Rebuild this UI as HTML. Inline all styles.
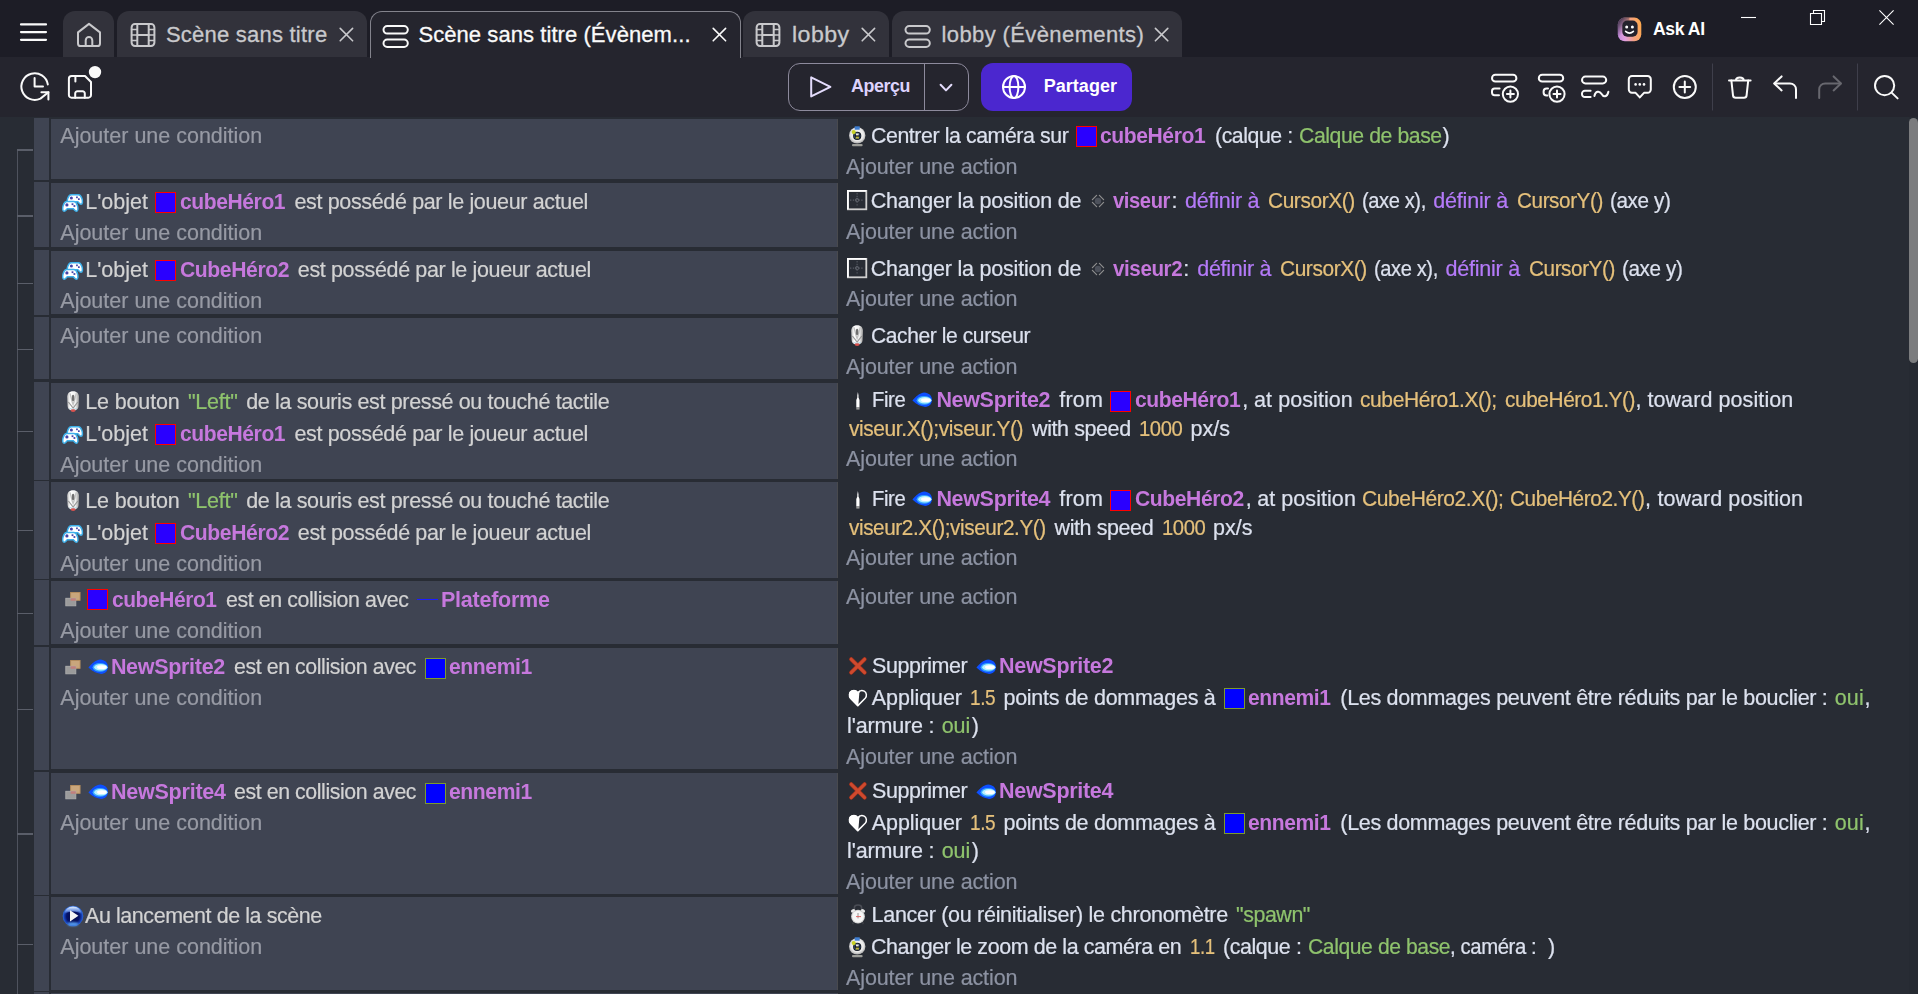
<!DOCTYPE html>
<html lang="fr"><head><meta charset="utf-8"><title>GDevelop - Scène sans titre (Évènements)</title>
<style>
html,body{margin:0;padding:0}
body{width:1918px;height:994px;overflow:hidden;background:#282c34;font-family:"Liberation Sans",sans-serif;position:relative}
#titlebar{position:absolute;left:0;top:0;width:1918px;height:57px;background:#1d1d26}
#toolbar{position:absolute;left:0;top:57px;width:1918px;height:60px;background:#25252e}
#sheet{position:absolute;left:0;top:0;width:1918px;height:994px;overflow:hidden;pointer-events:none;will-change:transform}
#ctext{position:absolute;left:0;top:0;width:1918px;height:118px}
#chromesvg{position:absolute;left:0;top:0}
.tabx{position:absolute;top:11px;height:46px;background:#32323b;border-radius:12px 12px 0 0}
.tabact{position:absolute;top:11px;height:47px;background:#25252e;border:1px solid #83838c;border-bottom:none;border-radius:12px 12px 0 0;box-sizing:border-box}
.btnO{position:absolute;box-sizing:border-box;border:1px solid #8d8a9c;border-radius:12px}
.btnP{position:absolute;background:#4b27cf;border-radius:12px}
i{display:block;position:absolute;font-style:normal}
.t{position:absolute;white-space:pre;transform-origin:0 0;font-size:21.5px;line-height:24px;height:24px}
.c{color:#d2d2d2;-webkit-text-stroke:0.22px #d2d2d2}
.a{color:#dce1ee;-webkit-text-stroke:0.22px #dce1ee}
.addc{color:#979aa4;-webkit-text-stroke:0.22px #979aa4}
.adda{color:#8c92a2;-webkit-text-stroke:0.22px #8c92a2}
.obj{color:#c678dd;font-weight:bold}
.str{color:#8fc36d;-webkit-text-stroke:0.22px #8fc36d}
.num{color:#e5c07b;-webkit-text-stroke:0.22px #e5c07b}
.op{color:#b47af8;-webkit-text-stroke:0.22px #b47af8}
.tab{color:#c9c9cc;font-size:22px;-webkit-text-stroke:0.3px #c9c9cc}
.tabA{color:#fafafa;font-size:22px;-webkit-text-stroke:0.3px #fafafa}
.btn{color:#ddd3fd;font-weight:bold;font-size:18px}
.btnW{color:#fff;font-weight:bold;font-size:18px}
.hd{left:34px;width:15px;background:#3f4452}
.cd{left:51px;width:786px;background:#3f4452;border-right:1px solid #494a4e}
.tk{left:17px;width:16px;height:1.5px;background:#5a5e69}
.vl{left:17px;top:149px;width:1px;height:845px;background:#4f535e}
.ic{position:absolute;overflow:visible}
.sq{box-sizing:content-box;border:1px solid #f00}
.ln{height:1px;background:#1c1cff}
.sbt{left:1909px;top:117px;width:9px;height:877px;background:#262a32}
.sb{left:1909px;top:118px;width:8.5px;height:245px;background:#7b7c7e;border-radius:4.5px}
</style></head>
<body>
<div id="titlebar"></div>
<div id="toolbar"></div>
<div class="tabx" style="left:63px;width:51px"></div>
<div class="tabx" style="left:117px;width:250px"></div>
<div class="tabact" style="left:370px;width:370.5px"></div>
<div class="tabx" style="left:743px;width:146px"></div>
<div class="tabx" style="left:892px;width:290.3px"></div>
<div class="btnO" style="left:788px;top:63px;width:181px;height:48px"></div>
<div class="btnP" style="left:981px;top:63px;width:151px;height:48px"></div>
<svg id="chromesvg" width="1918" height="118" viewBox="0 0 1918 118" fill="none" stroke-linecap="round" stroke-linejoin="round">
<!-- hamburger -->
<path d="M21,24.4 H46 M21,32.1 H46 M21,39.8 H46" stroke="#fafafa" stroke-width="2.2"/>
<!-- home -->
<g stroke="#c9c9cc" stroke-width="2">
<path d="M78,32.4 L89,23.9 L100,32.4 V43.4 a2.6 2.6 0 0 1 -2.6 2.6 H80.6 a2.6 2.6 0 0 1 -2.6 -2.6 Z"/>
<path d="M85.7,46 V40.4 a3.3 3.3 0 0 1 6.6 0 V46"/>
</g>
<!-- film icons -->
<g id="film1" stroke="#c9c9cc" stroke-width="2">
<rect x="131.6" y="24" width="22.8" height="22" rx="3.4"/>
<path d="M137.3,24 V46 M148.7,24 V46 M137.3,35 H148.7" />
<path d="M131.6,29.5 H137.3 M131.6,35 H137.3 M131.6,40.5 H137.3 M148.7,29.5 H154.4 M148.7,35 H154.4 M148.7,40.5 H154.4" stroke-width="1.6"/>
</g>
<g stroke="#c9c9cc" stroke-width="2" transform="translate(625,0)">
<rect x="131.6" y="24" width="22.8" height="22" rx="3.4"/>
<path d="M137.3,24 V46 M148.7,24 V46 M137.3,35 H148.7" />
<path d="M131.6,29.5 H137.3 M131.6,35 H137.3 M131.6,40.5 H137.3 M148.7,29.5 H154.4 M148.7,35 H154.4 M148.7,40.5 H154.4" stroke-width="1.6"/>
</g>
<!-- events icons -->
<g stroke="#fafafa" stroke-width="2">
<rect x="383.5" y="26" width="24.3" height="7.6" rx="3.8"/>
<rect x="383.5" y="39.6" width="24.3" height="7.4" rx="3.7"/>
</g>
<g stroke="#c9c9cc" stroke-width="2">
<rect x="905.5" y="26" width="24.3" height="7.6" rx="3.8"/>
<rect x="905.5" y="39.6" width="24.3" height="7.4" rx="3.7"/>
</g>
<!-- tab close X -->
<g stroke="#c9c9cc" stroke-width="1.6">
<path d="M340.2,28.4 L352.6,40.8 M352.6,28.4 L340.2,40.8"/>
<path d="M862.2,28.4 L874.6,40.8 M874.6,28.4 L862.2,40.8"/>
<path d="M1155.4,28.4 L1167.8,40.8 M1167.8,28.4 L1155.4,40.8"/>
</g>
<path d="M713.2,28.4 L725.6,40.8 M725.6,28.4 L713.2,40.8" stroke="#fafafa" stroke-width="1.6"/>
<!-- Ask AI icon -->
<defs><linearGradient id="aig" x1="0" y1="0.6" x2="1" y2="0.4"><stop offset="0" stop-color="#c68cdc"/><stop offset="0.25" stop-color="#e3a0dc"/><stop offset="0.6" stop-color="#f3a083"/><stop offset="1" stop-color="#ffa94e"/></linearGradient>
<linearGradient id="aig2" x1="0" y1="0" x2="0.55" y2="0.75"><stop offset="0" stop-color="#1d1d26" stop-opacity="0.95"/><stop offset="0.45" stop-color="#1d1d26" stop-opacity="0.55"/><stop offset="1" stop-color="#1d1d26" stop-opacity="0"/></linearGradient></defs>
<rect x="1617.8" y="17.6" width="23.5" height="23.6" rx="7" fill="url(#aig)"/>
<path d="M1617.8,36 V24.6 a7 7 0 0 1 7 -7 H1629.4 V36 Z" fill="url(#aig2)"/>
<rect x="1622.3" y="20.6" width="15.3" height="16.2" rx="5" fill="#24222d"/>
<circle cx="1626.7" cy="26.9" r="1.5" fill="#fff"/><circle cx="1632.4" cy="26.9" r="1.5" fill="#fff"/>
<path d="M1625.6,31.4 Q1629.5,34.8 1633.4,31.4" stroke="#fff" stroke-width="1.6"/>
<!-- window controls -->
<g stroke="#fff" stroke-width="1.1" stroke-linecap="butt">
<path d="M1741,17.5 H1756"/>
<path d="M1810.5,13.5 H1821.5 V24.5 H1810.5 Z" stroke-linejoin="miter"/>
<path d="M1813.5,13.5 V10.5 H1824.5 V21.5 H1821.5" stroke-linejoin="miter"/>
<path d="M1879.4,10.4 L1893.6,24.6 M1893.6,10.4 L1879.4,24.6"/>
</g>
<!-- history icon -->
<g stroke="#fafafa" stroke-width="2">
<path d="M47.8,84.4 A13.3 13.3 0 1 0 40.4,98.6 L48.4,92.2"/>
<path d="M34.6,78 V86.6 H43"/>
<path d="M41.4,92.2 H48.4 V99.4"/>
</g>
<!-- save icon -->
<g stroke="#fafafa" stroke-width="2">
<path d="M71.6,76 H85 L91,82 V95 a2.7 2.7 0 0 1 -2.7 2.7 H71.6 a2.7 2.7 0 0 1 -2.7 -2.7 V78.7 a2.7 2.7 0 0 1 2.7 -2.7 Z"/>
<path d="M75.4,76 V81.4"/>
<path d="M75.2,97.7 V93.4 a2.2 2.2 0 0 1 2.2,-2.2 H82.6 a2.2 2.2 0 0 1 2.2,2.2 V97.7"/>
</g>
<circle cx="95" cy="72.1" r="6.2" fill="#fafafa"/>
<!-- apercu -->
<path d="M924.5,63.5 V110.5" stroke="#8d8a9c" stroke-width="1" stroke-linecap="butt"/>
<path d="M811.2,77.4 V96.4 L830.4,86.9 Z" stroke="#e4dcfc" stroke-width="2"/>
<path d="M940.6,84.8 L946,90.4 L951.4,84.8" stroke="#e4dcfc" stroke-width="2"/>
<!-- globe -->
<g stroke="#fff" stroke-width="2">
<circle cx="1014" cy="87" r="11"/>
<ellipse cx="1014" cy="87" rx="4.4" ry="11"/>
<path d="M1003,87 H1025"/>
</g>
<!-- toolbar right icons -->
<g stroke="#fafafa" stroke-width="2">
<!-- add event -->
<rect x="1492" y="74.8" width="24.4" height="6.8" rx="3.4"/>
<path d="M1499.6,88.6 H1494.6 a2.6 2.6 0 0 0 -2.6 2.6 V92.6 a2.6 2.6 0 0 0 2.6 2.6 H1499"/>
<circle cx="1510.4" cy="94.1" r="7.6"/>
<path d="M1510.4,90.6 V97.6 M1506.9,94.1 H1513.9"/>
<!-- add sub event -->
<rect x="1538.8" y="74.8" width="24.4" height="6.8" rx="3.4"/>
<path d="M1548,88.6 H1546.6 a3 3 0 0 0 -3 3 V92.4 a3 3 0 0 0 3 3 H1547.4"/>
<circle cx="1557" cy="94.1" r="7.6"/>
<path d="M1557,90.6 V97.6 M1553.5,94.1 H1560.5"/>
<!-- add other -->
<rect x="1582" y="76.6" width="24.2" height="6.8" rx="3.4"/>
<path d="M1590.6,90.8 H1584.8 a2.8 2.8 0 0 0 -2.8 2.8 V94.2 a2.8 2.8 0 0 0 2.8 2.8 H1590.6"/>
<path d="M1594.4,96 C1595.4,91 1599.4,90.4 1601.4,93.8 C1603.4,97.4 1607.2,97.4 1608.4,91.8"/>
<!-- comment -->
<path d="M1632,76 H1647.6 a3.2 3.2 0 0 1 3.2 3.2 V89.6 a3.2 3.2 0 0 1 -3.2 3.2 H1644 L1639.8,97.4 L1635.6,92.8 H1632 a3.2 3.2 0 0 1 -3.2 -3.2 V79.2 a3.2 3.2 0 0 1 3.2 -3.2 Z"/>
<!-- plus circle -->
<circle cx="1684.8" cy="87" r="11"/>
<path d="M1684.8,81.6 V92.4 M1679.4,87 H1690.2"/>
<!-- trash -->
<path d="M1729,80.4 H1750.6"/>
<path d="M1736,80 C1736,76.6 1743.6,76.6 1743.6,80"/>
<path d="M1731.4,80.6 L1733,95.4 a2.6 2.6 0 0 0 2.6 2.4 H1744 a2.6 2.6 0 0 0 2.6 -2.4 L1748.2,80.6"/>
<!-- undo -->
<path d="M1781.6,76.4 L1774.2,83.4 L1781.6,90.4"/>
<path d="M1774.6,83.4 H1790 a6 6 0 0 1 6 6 V98"/>
<!-- search -->
<circle cx="1884.6" cy="85.6" r="9.6"/>
<path d="M1891.6,92.6 L1897.6,98.4"/>
</g>
<g fill="#fafafa"><circle cx="1635.6" cy="84.4" r="1.3"/><circle cx="1639.8" cy="84.4" r="1.3"/><circle cx="1644" cy="84.4" r="1.3"/></g>
<!-- redo (disabled) -->
<g stroke="#68686f" stroke-width="2">
<path d="M1833.6,76.4 L1841,83.4 L1833.6,90.4"/>
<path d="M1840.6,83.4 H1825.2 a6 6 0 0 0 -6 6 V98"/>
</g>
<!-- dividers -->
<path d="M1712.5,63.5 V110.5 M1857.5,63.5 V110.5" stroke="#3f3f4b" stroke-width="1" stroke-linecap="butt"/>
</svg>

<div id="ctext"><span class="t tab" style="left:165.9px;top:23px;letter-spacing:0.232px">Scène sans titre</span><span class="t tabA" style="left:418.4px;top:23px;letter-spacing:0.072px">Scène sans titre (Évènem...</span><span class="t tab" style="left:792.45px;top:23px;letter-spacing:0.42px;transform:scaleX(1.0531)">lobby</span><span class="t tab" style="left:941.5px;top:23px;letter-spacing:0.393px">lobby (Évènements)</span><span class="t btn" style="left:850.6px;top:74px;letter-spacing:-0.42px;transform:scaleX(0.9912)">Aperçu</span><span class="t btnW" style="left:1043.7px;top:74px;letter-spacing:0.038px">Partager</span><span class="t btnW" style="left:1653.3px;top:17px;letter-spacing:-0.42px;transform:scaleX(0.9769)">Ask AI</span></div>
<div id="sheet">
<i class="vl"></i>
<i class="hd" style="top:118px;height:61.6px"></i><i class="cd" style="top:119px;height:60px"></i><i class="hd" style="top:182px;height:65px"></i><i class="cd" style="top:183px;height:64px"></i><i class="hd" style="top:250px;height:64.6px"></i><i class="cd" style="top:251px;height:63px"></i><i class="hd" style="top:317px;height:62px"></i><i class="cd" style="top:318px;height:61px"></i><i class="hd" style="top:382px;height:97.8px"></i><i class="cd" style="top:383px;height:96px"></i><i class="hd" style="top:481px;height:97.8px"></i><i class="cd" style="top:482px;height:96px"></i><i class="hd" style="top:580px;height:64.8px"></i><i class="cd" style="top:581px;height:63px"></i><i class="hd" style="top:647px;height:122.8px"></i><i class="cd" style="top:648px;height:121px"></i><i class="hd" style="top:772px;height:122.8px"></i><i class="cd" style="top:773px;height:121px"></i><i class="hd" style="top:896px;height:95px"></i><i class="cd" style="top:897px;height:93px"></i><i class="hd" style="top:992px;height:2px"></i><i class="cd" style="top:993px;height:1px"></i><i class="tk" style="top:149.0px;height:2px"></i><i class="tk" style="top:215.1px;height:1.6px"></i><i class="tk" style="top:282.75px;height:1.3px"></i><i class="tk" style="top:348.85px;height:1.3px"></i><i class="tk" style="top:430.85px;height:1.3px"></i><i class="tk" style="top:529.85px;height:1.3px"></i><i class="tk" style="top:612.7px;height:1.4px"></i><i class="tk" style="top:708.7px;height:1.4px"></i><i class="tk" style="top:833.1px;height:1.6px"></i><i class="tk" style="top:943.75px;height:1.3px"></i>
<svg class="ic" style="left:61px;top:193px" width="24" height="20" viewBox="-1 -1 24 20"><g transform="translate(4.5,-6.9)"><path d="M2.2,17.2 C0.4,17.2 0.3,14 1.2,11.4 C2,9 2.8,7.6 4.8,7.6 L11.8,7.6 C13.8,7.6 14.6,9 15.4,11.4 C16.3,14 16.2,17.2 14.4,17.2 C13.1,17.2 12.4,15.6 11.4,14.7 L5.2,14.7 C4.2,15.6 3.5,17.2 2.2,17.2 Z" fill="#fff" stroke="#3db0ea" stroke-width="1.5"/><circle cx="4.9" cy="11" r="1.5" fill="#4343a8"/><rect x="9.6" y="9.4" width="1.7" height="1.7" fill="#4343a8"/><rect x="11.5" y="11.2" width="1.7" height="1.7" fill="#4343a8"/></g><path d="M2.2,17.2 C0.4,17.2 0.3,14 1.2,11.4 C2,9 2.8,7.6 4.8,7.6 L11.8,7.6 C13.8,7.6 14.6,9 15.4,11.4 C16.3,14 16.2,17.2 14.4,17.2 C13.1,17.2 12.4,15.6 11.4,14.7 L5.2,14.7 C4.2,15.6 3.5,17.2 2.2,17.2 Z" fill="#fff" stroke="#3db0ea" stroke-width="1.5"/><circle cx="4.9" cy="10.9" r="1.6" fill="#4343a8"/><rect x="9.6" y="9.3" width="1.8" height="1.8" fill="#4343a8"/><rect x="11.5" y="11.1" width="1.8" height="1.8" fill="#4343a8"/></svg><i class="sq" style="left:155px;top:192px;width:19px;height:19px;border-color:#ff0000;background:#2a00ff"></i><svg class="ic" style="left:61px;top:261px" width="24" height="20" viewBox="-1 -1 24 20"><g transform="translate(4.5,-6.9)"><path d="M2.2,17.2 C0.4,17.2 0.3,14 1.2,11.4 C2,9 2.8,7.6 4.8,7.6 L11.8,7.6 C13.8,7.6 14.6,9 15.4,11.4 C16.3,14 16.2,17.2 14.4,17.2 C13.1,17.2 12.4,15.6 11.4,14.7 L5.2,14.7 C4.2,15.6 3.5,17.2 2.2,17.2 Z" fill="#fff" stroke="#3db0ea" stroke-width="1.5"/><circle cx="4.9" cy="11" r="1.5" fill="#4343a8"/><rect x="9.6" y="9.4" width="1.7" height="1.7" fill="#4343a8"/><rect x="11.5" y="11.2" width="1.7" height="1.7" fill="#4343a8"/></g><path d="M2.2,17.2 C0.4,17.2 0.3,14 1.2,11.4 C2,9 2.8,7.6 4.8,7.6 L11.8,7.6 C13.8,7.6 14.6,9 15.4,11.4 C16.3,14 16.2,17.2 14.4,17.2 C13.1,17.2 12.4,15.6 11.4,14.7 L5.2,14.7 C4.2,15.6 3.5,17.2 2.2,17.2 Z" fill="#fff" stroke="#3db0ea" stroke-width="1.5"/><circle cx="4.9" cy="10.9" r="1.6" fill="#4343a8"/><rect x="9.6" y="9.3" width="1.8" height="1.8" fill="#4343a8"/><rect x="11.5" y="11.1" width="1.8" height="1.8" fill="#4343a8"/></svg><i class="sq" style="left:155px;top:260px;width:19px;height:19px;border-color:#ff0000;background:#2a00ff"></i><svg class="ic" style="left:66.5px;top:390.7px" width="13" height="22" viewBox="0 0 13 22"><defs><linearGradient id="g1" x1="0" y1="0" x2="1" y2="0"><stop offset="0" stop-color="#b9b9b9"/><stop offset="0.25" stop-color="#ffffff"/><stop offset="0.7" stop-color="#f0f0f0"/><stop offset="1" stop-color="#9a9a9a"/></linearGradient></defs><path d="M6.1,0.3 C10,0.3 12,2.6 12,6 L11.6,15 C11.3,18.4 9,19.6 6.1,19.6 C3.2,19.6 0.9,18.4 0.6,15 L0.2,6 C0.2,2.6 2.2,0.3 6.1,0.3 Z" fill="url(#g1)"/><path d="M3,2.4 C4,6 4.6,10 6.1,13.6 C7.6,10 8.2,6 9.2,2.4" fill="none" stroke="#c4c4c4" stroke-width="1.3"/><ellipse cx="6.1" cy="7" rx="1.3" ry="3.3" fill="#707070"/><path d="M1.4,11 L6.1,17 L10.8,11" fill="none" stroke="#8f8f8f" stroke-width="1.2" opacity=".9"/><path d="M2.6,17.6 Q6.1,19.2 9.6,17.6" fill="none" stroke="#a8d4e6" stroke-width="1"/><ellipse cx="6.1" cy="19.6" rx="2.5" ry="1.4" fill="#d9534f"/></svg><svg class="ic" style="left:61px;top:425px" width="24" height="20" viewBox="-1 -1 24 20"><g transform="translate(4.5,-6.9)"><path d="M2.2,17.2 C0.4,17.2 0.3,14 1.2,11.4 C2,9 2.8,7.6 4.8,7.6 L11.8,7.6 C13.8,7.6 14.6,9 15.4,11.4 C16.3,14 16.2,17.2 14.4,17.2 C13.1,17.2 12.4,15.6 11.4,14.7 L5.2,14.7 C4.2,15.6 3.5,17.2 2.2,17.2 Z" fill="#fff" stroke="#3db0ea" stroke-width="1.5"/><circle cx="4.9" cy="11" r="1.5" fill="#4343a8"/><rect x="9.6" y="9.4" width="1.7" height="1.7" fill="#4343a8"/><rect x="11.5" y="11.2" width="1.7" height="1.7" fill="#4343a8"/></g><path d="M2.2,17.2 C0.4,17.2 0.3,14 1.2,11.4 C2,9 2.8,7.6 4.8,7.6 L11.8,7.6 C13.8,7.6 14.6,9 15.4,11.4 C16.3,14 16.2,17.2 14.4,17.2 C13.1,17.2 12.4,15.6 11.4,14.7 L5.2,14.7 C4.2,15.6 3.5,17.2 2.2,17.2 Z" fill="#fff" stroke="#3db0ea" stroke-width="1.5"/><circle cx="4.9" cy="10.9" r="1.6" fill="#4343a8"/><rect x="9.6" y="9.3" width="1.8" height="1.8" fill="#4343a8"/><rect x="11.5" y="11.1" width="1.8" height="1.8" fill="#4343a8"/></svg><i class="sq" style="left:155px;top:424px;width:19px;height:19px;border-color:#ff0000;background:#2a00ff"></i><svg class="ic" style="left:66.5px;top:489.7px" width="13" height="22" viewBox="0 0 13 22"><defs><linearGradient id="g2" x1="0" y1="0" x2="1" y2="0"><stop offset="0" stop-color="#b9b9b9"/><stop offset="0.25" stop-color="#ffffff"/><stop offset="0.7" stop-color="#f0f0f0"/><stop offset="1" stop-color="#9a9a9a"/></linearGradient></defs><path d="M6.1,0.3 C10,0.3 12,2.6 12,6 L11.6,15 C11.3,18.4 9,19.6 6.1,19.6 C3.2,19.6 0.9,18.4 0.6,15 L0.2,6 C0.2,2.6 2.2,0.3 6.1,0.3 Z" fill="url(#g2)"/><path d="M3,2.4 C4,6 4.6,10 6.1,13.6 C7.6,10 8.2,6 9.2,2.4" fill="none" stroke="#c4c4c4" stroke-width="1.3"/><ellipse cx="6.1" cy="7" rx="1.3" ry="3.3" fill="#707070"/><path d="M1.4,11 L6.1,17 L10.8,11" fill="none" stroke="#8f8f8f" stroke-width="1.2" opacity=".9"/><path d="M2.6,17.6 Q6.1,19.2 9.6,17.6" fill="none" stroke="#a8d4e6" stroke-width="1"/><ellipse cx="6.1" cy="19.6" rx="2.5" ry="1.4" fill="#d9534f"/></svg><svg class="ic" style="left:61px;top:524px" width="24" height="20" viewBox="-1 -1 24 20"><g transform="translate(4.5,-6.9)"><path d="M2.2,17.2 C0.4,17.2 0.3,14 1.2,11.4 C2,9 2.8,7.6 4.8,7.6 L11.8,7.6 C13.8,7.6 14.6,9 15.4,11.4 C16.3,14 16.2,17.2 14.4,17.2 C13.1,17.2 12.4,15.6 11.4,14.7 L5.2,14.7 C4.2,15.6 3.5,17.2 2.2,17.2 Z" fill="#fff" stroke="#3db0ea" stroke-width="1.5"/><circle cx="4.9" cy="11" r="1.5" fill="#4343a8"/><rect x="9.6" y="9.4" width="1.7" height="1.7" fill="#4343a8"/><rect x="11.5" y="11.2" width="1.7" height="1.7" fill="#4343a8"/></g><path d="M2.2,17.2 C0.4,17.2 0.3,14 1.2,11.4 C2,9 2.8,7.6 4.8,7.6 L11.8,7.6 C13.8,7.6 14.6,9 15.4,11.4 C16.3,14 16.2,17.2 14.4,17.2 C13.1,17.2 12.4,15.6 11.4,14.7 L5.2,14.7 C4.2,15.6 3.5,17.2 2.2,17.2 Z" fill="#fff" stroke="#3db0ea" stroke-width="1.5"/><circle cx="4.9" cy="10.9" r="1.6" fill="#4343a8"/><rect x="9.6" y="9.3" width="1.8" height="1.8" fill="#4343a8"/><rect x="11.5" y="11.1" width="1.8" height="1.8" fill="#4343a8"/></svg><i class="sq" style="left:155px;top:523px;width:19px;height:19px;border-color:#ff0000;background:#2a00ff"></i><svg class="ic" style="left:64.7px;top:592.3px" width="17" height="15" viewBox="0 0 17 15"><rect x="5.65" y="0.5" width="9.4" height="7.8" fill="#c9a67c" stroke="#b88f5e" stroke-width="0.9"/><rect x="0.8" y="6.3" width="10" height="7.5" fill="#9b9b9b" stroke="#adadad" stroke-width="0.9"/><rect x="5.65" y="6.3" width="5.15" height="2.45" fill="#c27f7c"/></svg><i class="sq" style="left:87px;top:589px;width:19px;height:19px;border-color:#ff0000;background:#2a00ff"></i><i class="ln" style="left:417px;top:599px;width:20.5px"></i><svg class="ic" style="left:64.7px;top:659.6px" width="17" height="15" viewBox="0 0 17 15"><rect x="5.65" y="0.5" width="9.4" height="7.8" fill="#c9a67c" stroke="#b88f5e" stroke-width="0.9"/><rect x="0.8" y="6.3" width="10" height="7.5" fill="#9b9b9b" stroke="#adadad" stroke-width="0.9"/><rect x="5.65" y="6.3" width="5.15" height="2.45" fill="#c27f7c"/></svg><svg class="ic" style="left:87.5px;top:659.1px" width="21" height="16" viewBox="0 0 21 16"><defs><filter id="g3" x="-30%" y="-30%" width="160%" height="160%"><feGaussianBlur stdDeviation="0.75"/></filter><filter id="g4" x="-30%" y="-30%" width="160%" height="160%"><feGaussianBlur stdDeviation="0.7"/></filter></defs><path d="M0.4,8.6 C3,5.2 6.4,2.2 9.4,1.2 C11,0.1 13.6,0.2 15.2,1.2 C18.6,2.2 20.2,5.2 20,8.4 C19.8,11.8 17.6,14.2 14.6,14.8 C10.6,15.4 5,13 0.4,8.6 Z" fill="#0c50ff" filter="url(#g3)"/><ellipse cx="12" cy="8.3" rx="7.4" ry="4.4" fill="#38aaff" filter="url(#g3)"/><ellipse cx="12.8" cy="8.3" rx="6.6" ry="3.2" fill="#b8f2ff" filter="url(#g4)"/><ellipse cx="13.8" cy="8.2" rx="4.8" ry="1.9" fill="#fff" filter="url(#g4)"/></svg><i class="sq" style="left:424.5px;top:657.5px;width:19px;height:19px;border-color:#7c9a2e;background:#0000ff"></i><svg class="ic" style="left:64.7px;top:784.6px" width="17" height="15" viewBox="0 0 17 15"><rect x="5.65" y="0.5" width="9.4" height="7.8" fill="#c9a67c" stroke="#b88f5e" stroke-width="0.9"/><rect x="0.8" y="6.3" width="10" height="7.5" fill="#9b9b9b" stroke="#adadad" stroke-width="0.9"/><rect x="5.65" y="6.3" width="5.15" height="2.45" fill="#c27f7c"/></svg><svg class="ic" style="left:87.5px;top:784.1px" width="21" height="16" viewBox="0 0 21 16"><defs><filter id="g5" x="-30%" y="-30%" width="160%" height="160%"><feGaussianBlur stdDeviation="0.75"/></filter><filter id="g6" x="-30%" y="-30%" width="160%" height="160%"><feGaussianBlur stdDeviation="0.7"/></filter></defs><path d="M0.4,8.6 C3,5.2 6.4,2.2 9.4,1.2 C11,0.1 13.6,0.2 15.2,1.2 C18.6,2.2 20.2,5.2 20,8.4 C19.8,11.8 17.6,14.2 14.6,14.8 C10.6,15.4 5,13 0.4,8.6 Z" fill="#0c50ff" filter="url(#g5)"/><ellipse cx="12" cy="8.3" rx="7.4" ry="4.4" fill="#38aaff" filter="url(#g5)"/><ellipse cx="12.8" cy="8.3" rx="6.6" ry="3.2" fill="#b8f2ff" filter="url(#g6)"/><ellipse cx="13.8" cy="8.2" rx="4.8" ry="1.9" fill="#fff" filter="url(#g6)"/></svg><i class="sq" style="left:424.5px;top:782.5px;width:19px;height:19px;border-color:#7c9a2e;background:#0000ff"></i><svg class="ic" style="left:61.9px;top:905.4px" width="22" height="22" viewBox="0 0 22 22"><defs><radialGradient id="g7" cx="0.5" cy="0.52" r="0.5"><stop offset="0" stop-color="#04093f"/><stop offset="0.62" stop-color="#061268"/><stop offset="0.86" stop-color="#1742b8"/><stop offset="1" stop-color="#2f6fe6"/></radialGradient><linearGradient id="g8" x1="0" y1="0" x2="0" y2="1"><stop offset="0" stop-color="#e6f2ff"/><stop offset="0.55" stop-color="#8fb8ff" stop-opacity="0.75"/><stop offset="1" stop-color="#3f78e8" stop-opacity="0"/></linearGradient><filter id="g9" x="-30%" y="-50%" width="160%" height="200%"><feGaussianBlur stdDeviation="0.9"/></filter></defs><circle cx="11" cy="11" r="10.3" fill="url(#g7)"/><path d="M2.2,9.4 C2.8,4.6 6.4,1.6 11,1.6 C15.6,1.6 19.2,4.6 19.8,9.4 C17,7.4 14,6.6 11,6.6 C8,6.6 5,7.4 2.2,9.4 Z" fill="url(#g8)"/><ellipse cx="11" cy="19" rx="5.4" ry="1.8" fill="#5aa4f4" filter="url(#g9)"/><path d="M8,5.2 L8,16.4 L16.4,10.7 Z" fill="#f4f4f4"/></svg><svg class="ic" style="left:847.3px;top:124.6px" width="21" height="22" viewBox="0 0 21 22"><defs><radialGradient id="g10" cx="0.5" cy="0.45" r="0.55"><stop offset="0" stop-color="#fff"/><stop offset="0.7" stop-color="#e9e9e9"/><stop offset="1" stop-color="#a9a9a9"/></radialGradient></defs><rect x="5" y="19" width="10.6" height="2.2" rx="1" fill="#9b9c98"/><circle cx="10.2" cy="10.4" r="8.2" fill="url(#g10)"/><rect x="7.7" y="1.3" width="5" height="3.4" fill="#3f7ed0"/><circle cx="10.2" cy="10.9" r="4.1" fill="#111318"/><circle cx="10.2" cy="10.9" r="3" fill="none" stroke="#31527e" stroke-width="0.8"/><rect x="8.9" y="8.4" width="2.8" height="2" fill="#e8e8e8"/><rect x="8.7" y="11.6" width="3.2" height="2" fill="#b9b23a"/><circle cx="6.7" cy="7.1" r="2.1" fill="#c8d226"/></svg><i class="sq" style="left:1076.1px;top:126px;width:19px;height:19px;border-color:#ff0000;background:#2a00ff"></i><svg class="ic" style="left:846.8px;top:190.2px" width="21" height="21" viewBox="0 0 21 21"><rect x="0.9" y="0.9" width="18.4" height="18.4" fill="none" stroke="#cfcfcf" stroke-width="1.8"/><path d="M0.9,19.3 V0.9 H19.3" fill="none" stroke="#ffffff" stroke-width="1.8"/><path d="M10.1,3 V17 M3,10.1 H17" stroke="#555962" stroke-width="1.1" stroke-dasharray="1.4 1.4" fill="none"/><circle cx="10.1" cy="10.1" r="1.7" fill="none" stroke="#5b5f68" stroke-width="1"/></svg><svg class="ic" style="left:1091.4px;top:193.7px" width="14" height="14" viewBox="0 0 14 14"><circle cx="7" cy="7" r="3.2" fill="#4d515b"/><path d="M1.4,5.6 L5.6,1.4 M8.4,1.4 L12.6,5.6 M12.6,8.4 L8.4,12.6 M5.6,12.6 L1.4,8.4" stroke="#8f8f8f" stroke-width="1.2" stroke-linecap="round" fill="none"/></svg><svg class="ic" style="left:846.8px;top:258.2px" width="21" height="21" viewBox="0 0 21 21"><rect x="0.9" y="0.9" width="18.4" height="18.4" fill="none" stroke="#cfcfcf" stroke-width="1.8"/><path d="M0.9,19.3 V0.9 H19.3" fill="none" stroke="#ffffff" stroke-width="1.8"/><path d="M10.1,3 V17 M3,10.1 H17" stroke="#555962" stroke-width="1.1" stroke-dasharray="1.4 1.4" fill="none"/><circle cx="10.1" cy="10.1" r="1.7" fill="none" stroke="#5b5f68" stroke-width="1"/></svg><svg class="ic" style="left:1091.4px;top:261.7px" width="14" height="14" viewBox="0 0 14 14"><circle cx="7" cy="7" r="3.2" fill="#4d515b"/><path d="M1.4,5.6 L5.6,1.4 M8.4,1.4 L12.6,5.6 M12.6,8.4 L8.4,12.6 M5.6,12.6 L1.4,8.4" stroke="#8f8f8f" stroke-width="1.2" stroke-linecap="round" fill="none"/></svg><svg class="ic" style="left:851.2px;top:325.4px" width="13" height="22" viewBox="0 0 13 22"><defs><linearGradient id="g11" x1="0" y1="0" x2="1" y2="0"><stop offset="0" stop-color="#b9b9b9"/><stop offset="0.25" stop-color="#ffffff"/><stop offset="0.7" stop-color="#f0f0f0"/><stop offset="1" stop-color="#9a9a9a"/></linearGradient></defs><path d="M6.1,0.3 C10,0.3 12,2.6 12,6 L11.6,15 C11.3,18.4 9,19.6 6.1,19.6 C3.2,19.6 0.9,18.4 0.6,15 L0.2,6 C0.2,2.6 2.2,0.3 6.1,0.3 Z" fill="url(#g11)"/><path d="M3,2.4 C4,6 4.6,10 6.1,13.6 C7.6,10 8.2,6 9.2,2.4" fill="none" stroke="#c4c4c4" stroke-width="1.3"/><ellipse cx="6.1" cy="7" rx="1.3" ry="3.3" fill="#707070"/><path d="M1.4,11 L6.1,17 L10.8,11" fill="none" stroke="#8f8f8f" stroke-width="1.2" opacity=".9"/><path d="M2.6,17.6 Q6.1,19.2 9.6,17.6" fill="none" stroke="#a8d4e6" stroke-width="1"/><ellipse cx="6.1" cy="19.6" rx="2.5" ry="1.4" fill="#d9534f"/></svg><svg class="ic" style="left:855.6px;top:392px" width="4" height="18" viewBox="0 0 4 18"><path d="M1.9,0 L2.5,3.2 L2.5,5.6 L3.5,8 L3.5,15.6 L0.3,15.6 L0.3,8 L1.3,5.6 L1.3,3.2 Z" fill="#ffffff"/><rect x="0.3" y="15.6" width="3.2" height="2" fill="#9a9a9a"/></svg><svg class="ic" style="left:912.4px;top:392.4px" width="21" height="16" viewBox="0 0 21 16"><defs><filter id="g12" x="-30%" y="-30%" width="160%" height="160%"><feGaussianBlur stdDeviation="0.75"/></filter><filter id="g13" x="-30%" y="-30%" width="160%" height="160%"><feGaussianBlur stdDeviation="0.7"/></filter></defs><path d="M0.4,8.6 C3,5.2 6.4,2.2 9.4,1.2 C11,0.1 13.6,0.2 15.2,1.2 C18.6,2.2 20.2,5.2 20,8.4 C19.8,11.8 17.6,14.2 14.6,14.8 C10.6,15.4 5,13 0.4,8.6 Z" fill="#0c50ff" filter="url(#g12)"/><ellipse cx="12" cy="8.3" rx="7.4" ry="4.4" fill="#38aaff" filter="url(#g12)"/><ellipse cx="12.8" cy="8.3" rx="6.6" ry="3.2" fill="#b8f2ff" filter="url(#g13)"/><ellipse cx="13.8" cy="8.2" rx="4.8" ry="1.9" fill="#fff" filter="url(#g13)"/></svg><i class="sq" style="left:1110px;top:390.5px;width:19px;height:19px;border-color:#ff0000;background:#2a00ff"></i><svg class="ic" style="left:855.6px;top:491px" width="4" height="18" viewBox="0 0 4 18"><path d="M1.9,0 L2.5,3.2 L2.5,5.6 L3.5,8 L3.5,15.6 L0.3,15.6 L0.3,8 L1.3,5.6 L1.3,3.2 Z" fill="#ffffff"/><rect x="0.3" y="15.6" width="3.2" height="2" fill="#9a9a9a"/></svg><svg class="ic" style="left:912.4px;top:491.4px" width="21" height="16" viewBox="0 0 21 16"><defs><filter id="g14" x="-30%" y="-30%" width="160%" height="160%"><feGaussianBlur stdDeviation="0.75"/></filter><filter id="g15" x="-30%" y="-30%" width="160%" height="160%"><feGaussianBlur stdDeviation="0.7"/></filter></defs><path d="M0.4,8.6 C3,5.2 6.4,2.2 9.4,1.2 C11,0.1 13.6,0.2 15.2,1.2 C18.6,2.2 20.2,5.2 20,8.4 C19.8,11.8 17.6,14.2 14.6,14.8 C10.6,15.4 5,13 0.4,8.6 Z" fill="#0c50ff" filter="url(#g14)"/><ellipse cx="12" cy="8.3" rx="7.4" ry="4.4" fill="#38aaff" filter="url(#g14)"/><ellipse cx="12.8" cy="8.3" rx="6.6" ry="3.2" fill="#b8f2ff" filter="url(#g15)"/><ellipse cx="13.8" cy="8.2" rx="4.8" ry="1.9" fill="#fff" filter="url(#g15)"/></svg><i class="sq" style="left:1110px;top:489.5px;width:19px;height:19px;border-color:#ff0000;background:#2a00ff"></i><svg class="ic" style="left:848.5px;top:657.3px" width="18" height="18" viewBox="0 0 18 18"><path d="M2.2,2.2 L15.6,15.6 M15.6,2.2 L2.2,15.6" stroke="#9c2f1c" stroke-width="4.2" stroke-linecap="round"/><path d="M2.2,2.2 L15.6,15.6 M15.6,2.2 L2.2,15.6" stroke="#cf4a2e" stroke-width="3" stroke-linecap="round"/></svg><svg class="ic" style="left:976.4px;top:658.8px" width="21" height="16" viewBox="0 0 21 16"><defs><filter id="g16" x="-30%" y="-30%" width="160%" height="160%"><feGaussianBlur stdDeviation="0.75"/></filter><filter id="g17" x="-30%" y="-30%" width="160%" height="160%"><feGaussianBlur stdDeviation="0.7"/></filter></defs><path d="M0.4,8.6 C3,5.2 6.4,2.2 9.4,1.2 C11,0.1 13.6,0.2 15.2,1.2 C18.6,2.2 20.2,5.2 20,8.4 C19.8,11.8 17.6,14.2 14.6,14.8 C10.6,15.4 5,13 0.4,8.6 Z" fill="#0c50ff" filter="url(#g16)"/><ellipse cx="12" cy="8.3" rx="7.4" ry="4.4" fill="#38aaff" filter="url(#g16)"/><ellipse cx="12.8" cy="8.3" rx="6.6" ry="3.2" fill="#b8f2ff" filter="url(#g17)"/><ellipse cx="13.8" cy="8.2" rx="4.8" ry="1.9" fill="#fff" filter="url(#g17)"/></svg><svg class="ic" style="left:848.6px;top:690.4px" width="18" height="17" viewBox="0 0 18 17"><defs><clipPath id="g18"><path d="M0,0 H10.6 L9.2,16.5 H0 Z"/></clipPath></defs><path d="M8.9,15.6 L1.6,8.2 C-0.4,6 0.2,2.4 2.6,1.2 C4.8,0.1 7.4,0.8 8.9,3 C10.4,0.8 13,0.1 15.2,1.2 C17.6,2.4 18.2,6 16.2,8.2 Z" fill="none" stroke="#fff" stroke-width="1.5" stroke-linejoin="round"/><path d="M8.9,15.6 L1.6,8.2 C-0.4,6 0.2,2.4 2.6,1.2 C4.8,0.1 7.4,0.8 8.9,3 C10.4,0.8 13,0.1 15.2,1.2 C17.6,2.4 18.2,6 16.2,8.2 Z" fill="#fff" stroke="#fff" stroke-width="1.5" stroke-linejoin="round" clip-path="url(#g18)"/></svg><i class="sq" style="left:1223.7px;top:688px;width:19px;height:19px;border-color:#7c9a2e;background:#0000ff"></i><svg class="ic" style="left:848.5px;top:782.3px" width="18" height="18" viewBox="0 0 18 18"><path d="M2.2,2.2 L15.6,15.6 M15.6,2.2 L2.2,15.6" stroke="#9c2f1c" stroke-width="4.2" stroke-linecap="round"/><path d="M2.2,2.2 L15.6,15.6 M15.6,2.2 L2.2,15.6" stroke="#cf4a2e" stroke-width="3" stroke-linecap="round"/></svg><svg class="ic" style="left:976.4px;top:783.8px" width="21" height="16" viewBox="0 0 21 16"><defs><filter id="g19" x="-30%" y="-30%" width="160%" height="160%"><feGaussianBlur stdDeviation="0.75"/></filter><filter id="g20" x="-30%" y="-30%" width="160%" height="160%"><feGaussianBlur stdDeviation="0.7"/></filter></defs><path d="M0.4,8.6 C3,5.2 6.4,2.2 9.4,1.2 C11,0.1 13.6,0.2 15.2,1.2 C18.6,2.2 20.2,5.2 20,8.4 C19.8,11.8 17.6,14.2 14.6,14.8 C10.6,15.4 5,13 0.4,8.6 Z" fill="#0c50ff" filter="url(#g19)"/><ellipse cx="12" cy="8.3" rx="7.4" ry="4.4" fill="#38aaff" filter="url(#g19)"/><ellipse cx="12.8" cy="8.3" rx="6.6" ry="3.2" fill="#b8f2ff" filter="url(#g20)"/><ellipse cx="13.8" cy="8.2" rx="4.8" ry="1.9" fill="#fff" filter="url(#g20)"/></svg><svg class="ic" style="left:848.6px;top:815.4px" width="18" height="17" viewBox="0 0 18 17"><defs><clipPath id="g21"><path d="M0,0 H10.6 L9.2,16.5 H0 Z"/></clipPath></defs><path d="M8.9,15.6 L1.6,8.2 C-0.4,6 0.2,2.4 2.6,1.2 C4.8,0.1 7.4,0.8 8.9,3 C10.4,0.8 13,0.1 15.2,1.2 C17.6,2.4 18.2,6 16.2,8.2 Z" fill="none" stroke="#fff" stroke-width="1.5" stroke-linejoin="round"/><path d="M8.9,15.6 L1.6,8.2 C-0.4,6 0.2,2.4 2.6,1.2 C4.8,0.1 7.4,0.8 8.9,3 C10.4,0.8 13,0.1 15.2,1.2 C17.6,2.4 18.2,6 16.2,8.2 Z" fill="#fff" stroke="#fff" stroke-width="1.5" stroke-linejoin="round" clip-path="url(#g21)"/></svg><i class="sq" style="left:1223.7px;top:813px;width:19px;height:19px;border-color:#7c9a2e;background:#0000ff"></i><svg class="ic" style="left:849.5px;top:903.8px" width="16" height="21" viewBox="0 0 16 21"><path d="M4.4,5.4 V3.6 C4.4,1.9 5.6,1 8,1 C10.4,1 11.6,1.9 11.6,3.6 V5.4" fill="none" stroke="#4a4d55" stroke-width="1.6"/><ellipse cx="3" cy="6.8" rx="2.3" ry="1.5" transform="rotate(-35 3 6.8)" fill="#e9e9e9"/><ellipse cx="13" cy="6.8" rx="2.3" ry="1.5" transform="rotate(35 13 6.8)" fill="#e9e9e9"/><path d="M3.6,18 L2.6,20.2 M12.4,18 L13.4,20.2" stroke="#3c3f46" stroke-width="1.6"/><circle cx="8" cy="12.6" r="6.9" fill="#d4d4d4"/><circle cx="8" cy="12.6" r="5.8" fill="#f6f6f6"/><path d="M8,9 V14.4" stroke="#8a8a8a" stroke-width="0.9"/><path d="M6,12.6 H11" stroke="#e05a5a" stroke-width="0.9"/></svg><svg class="ic" style="left:847.4px;top:935.7px" width="21" height="22" viewBox="0 0 21 22"><defs><radialGradient id="g22" cx="0.5" cy="0.45" r="0.55"><stop offset="0" stop-color="#fff"/><stop offset="0.7" stop-color="#e9e9e9"/><stop offset="1" stop-color="#a9a9a9"/></radialGradient></defs><rect x="5" y="19" width="10.6" height="2.2" rx="1" fill="#9b9c98"/><circle cx="10.2" cy="10.4" r="8.2" fill="url(#g22)"/><rect x="7.7" y="1.3" width="5" height="3.4" fill="#3f7ed0"/><circle cx="10.2" cy="10.9" r="4.1" fill="#111318"/><circle cx="10.2" cy="10.9" r="3" fill="none" stroke="#31527e" stroke-width="0.8"/><rect x="8.9" y="8.4" width="2.8" height="2" fill="#e8e8e8"/><rect x="8.7" y="11.6" width="3.2" height="2" fill="#b9b23a"/><circle cx="6.7" cy="7.1" r="2.1" fill="#c8d226"/></svg>
<span class="t addc" style="left:60.3px;top:124px;letter-spacing:-0.002px">Ajouter une condition</span><span class="t c" style="left:85.3px;top:190px;letter-spacing:-0.002px">L'objet</span><span class="t obj" style="left:179.7px;top:190px;letter-spacing:-0.42px;transform:scaleX(0.9796)">cubeHéro1</span><span class="t c" style="left:294.5px;top:190px;letter-spacing:-0.355px">est possédé par le joueur actuel</span><span class="t addc" style="left:60.3px;top:221px;letter-spacing:-0.002px">Ajouter une condition</span><span class="t c" style="left:85.3px;top:258px;letter-spacing:-0.002px">L'objet</span><span class="t obj" style="left:179.7px;top:258px;letter-spacing:-0.42px;transform:scaleX(0.9832)">CubeHéro2</span><span class="t c" style="left:297.8px;top:258px;letter-spacing:-0.365px">est possédé par le joueur actuel</span><span class="t addc" style="left:60.3px;top:289px;letter-spacing:-0.002px">Ajouter une condition</span><span class="t addc" style="left:60.3px;top:324px;letter-spacing:-0.002px">Ajouter une condition</span><span class="t c" style="left:85.2px;top:390px;letter-spacing:-0.136px">Le bouton</span><span class="t str" style="left:187.9px;top:390px;letter-spacing:-0.239px">"Left"</span><span class="t c" style="left:246.2px;top:390px;letter-spacing:-0.354px">de la souris est pressé ou touché tactile</span><span class="t c" style="left:85.3px;top:422px;letter-spacing:-0.002px">L'objet</span><span class="t obj" style="left:179.7px;top:422px;letter-spacing:-0.42px;transform:scaleX(0.9796)">cubeHéro1</span><span class="t c" style="left:294.5px;top:422px;letter-spacing:-0.355px">est possédé par le joueur actuel</span><span class="t addc" style="left:60.3px;top:453px;letter-spacing:-0.002px">Ajouter une condition</span><span class="t c" style="left:85.2px;top:489px;letter-spacing:-0.136px">Le bouton</span><span class="t str" style="left:187.9px;top:489px;letter-spacing:-0.239px">"Left"</span><span class="t c" style="left:246.2px;top:489px;letter-spacing:-0.354px">de la souris est pressé ou touché tactile</span><span class="t c" style="left:85.3px;top:521px;letter-spacing:-0.002px">L'objet</span><span class="t obj" style="left:179.7px;top:521px;letter-spacing:-0.42px;transform:scaleX(0.9832)">CubeHéro2</span><span class="t c" style="left:297.8px;top:521px;letter-spacing:-0.365px">est possédé par le joueur actuel</span><span class="t addc" style="left:60.3px;top:552px;letter-spacing:-0.002px">Ajouter une condition</span><span class="t obj" style="left:111.7px;top:588px;letter-spacing:-0.42px;transform:scaleX(0.974)">cubeHéro1</span><span class="t c" style="left:226.25px;top:588px;letter-spacing:-0.42px;transform:scaleX(0.9945)">est en collision avec</span><span class="t obj" style="left:441.0px;top:588px;letter-spacing:-0.241px">Plateforme</span><span class="t addc" style="left:60.3px;top:619px;letter-spacing:-0.002px">Ajouter une condition</span><span class="t obj" style="left:110.9px;top:655px;letter-spacing:-0.304px">NewSprite2</span><span class="t c" style="left:234.25px;top:655px;letter-spacing:-0.42px;transform:scaleX(0.9918)">est en collision avec</span><span class="t obj" style="left:449.25px;top:655px;letter-spacing:-0.42px;transform:scaleX(0.9823)">ennemi1</span><span class="t addc" style="left:60.3px;top:686px;letter-spacing:-0.002px">Ajouter une condition</span><span class="t obj" style="left:110.9px;top:780px;letter-spacing:-0.215px">NewSprite4</span><span class="t c" style="left:234.25px;top:780px;letter-spacing:-0.42px;transform:scaleX(0.9918)">est en collision avec</span><span class="t obj" style="left:449.25px;top:780px;letter-spacing:-0.42px;transform:scaleX(0.9823)">ennemi1</span><span class="t addc" style="left:60.3px;top:811px;letter-spacing:-0.002px">Ajouter une condition</span><span class="t c" style="left:85.4px;top:904px;letter-spacing:-0.42px;transform:scaleX(0.9979)">Au lancement de la scène</span><span class="t addc" style="left:60.3px;top:935px;letter-spacing:-0.002px">Ajouter une condition</span><span class="t a" style="left:870.81px;top:124px;letter-spacing:-0.42px;transform:scaleX(0.9912)">Centrer la caméra sur</span><span class="t obj" style="left:1100.1px;top:124px;letter-spacing:-0.42px;transform:scaleX(0.9805)">cubeHéro1</span><span class="t a" style="left:1214.51px;top:124px;letter-spacing:-0.42px;transform:scaleX(0.988)">(calque :</span><span class="t str" style="left:1298.71px;top:124px;letter-spacing:-0.42px;transform:scaleX(0.986)">Calque de base</span><span class="t a" style="left:1442.5px;top:124px">)</span><span class="t adda" style="left:846.0px;top:155px;letter-spacing:-0.109px">Ajouter une action</span><span class="t a" style="left:870.8px;top:189px;letter-spacing:-0.214px">Changer la position de</span><span class="t obj" style="left:1112.6px;top:189px;letter-spacing:-0.42px;transform:scaleX(0.9373)">viseur</span><span class="t a" style="left:1171.6px;top:189px">:</span><span class="t op" style="left:1185.1px;top:189px;letter-spacing:-0.266px">définir à</span><span class="t num" style="left:1268.23px;top:189px;letter-spacing:-0.42px;transform:scaleX(0.9709)">CursorX()</span><span class="t a" style="left:1361.67px;top:189px;letter-spacing:-0.42px;transform:scaleX(0.9346)">(axe x),</span><span class="t op" style="left:1433.3px;top:189px;letter-spacing:-0.204px">définir à</span><span class="t num" style="left:1516.64px;top:189px;letter-spacing:-0.42px;transform:scaleX(0.9618)">CursorY()</span><span class="t a" style="left:1609.64px;top:189px;letter-spacing:-0.42px;transform:scaleX(0.9619)">(axe y)</span><span class="t adda" style="left:846.0px;top:220px;letter-spacing:-0.109px">Ajouter une action</span><span class="t a" style="left:870.8px;top:257px;letter-spacing:-0.214px">Changer la position de</span><span class="t obj" style="left:1112.6px;top:257px;letter-spacing:-0.42px;transform:scaleX(0.9571)">viseur2</span><span class="t a" style="left:1183.3px;top:257px">:</span><span class="t op" style="left:1197.2px;top:257px;letter-spacing:-0.266px">définir à</span><span class="t num" style="left:1280.33px;top:257px;letter-spacing:-0.42px;transform:scaleX(0.9709)">CursorX()</span><span class="t a" style="left:1373.77px;top:257px;letter-spacing:-0.42px;transform:scaleX(0.9346)">(axe x),</span><span class="t op" style="left:1445.4px;top:257px;letter-spacing:-0.204px">définir à</span><span class="t num" style="left:1528.74px;top:257px;letter-spacing:-0.42px;transform:scaleX(0.9618)">CursorY()</span><span class="t a" style="left:1621.74px;top:257px;letter-spacing:-0.42px;transform:scaleX(0.9619)">(axe y)</span><span class="t adda" style="left:846.0px;top:287px;letter-spacing:-0.109px">Ajouter une action</span><span class="t a" style="left:870.82px;top:324px;letter-spacing:-0.42px;transform:scaleX(0.9784)">Cacher le curseur</span><span class="t adda" style="left:846.0px;top:355px;letter-spacing:-0.109px">Ajouter une action</span><span class="t a" style="left:871.86px;top:388px;letter-spacing:-0.42px;transform:scaleX(0.9406)">Fire</span><span class="t obj" style="left:936.4px;top:388px;letter-spacing:-0.326px">NewSprite2</span><span class="t a" style="left:1059.2px;top:388px;letter-spacing:0.27px">from</span><span class="t obj" style="left:1134.7px;top:388px;letter-spacing:-0.42px;transform:scaleX(0.9805)">cubeHéro1</span><span class="t a" style="left:1242.2px;top:388px">,</span><span class="t a" style="left:1254.1px;top:388px;letter-spacing:0.065px">at position</span><span class="t num" style="left:1360.4px;top:388px;letter-spacing:-0.42px;transform:scaleX(0.9767)">cubeHéro1.X();</span><span class="t num" style="left:1505.1px;top:388px;letter-spacing:-0.42px;transform:scaleX(0.9685)">cubeHéro1.Y()</span><span class="t a" style="left:1635.5px;top:388px">,</span><span class="t a" style="left:1647.4px;top:388px;letter-spacing:0.089px">toward position</span><span class="t num" style="left:849.1px;top:417px;letter-spacing:-0.42px;transform:scaleX(0.9741)">viseur.X();viseur.Y()</span><span class="t a" style="left:1032.1px;top:417px;letter-spacing:-0.42px">with speed</span><span class="t num" style="left:1139.16px;top:417px;letter-spacing:-0.42px;transform:scaleX(0.9405)">1000</span><span class="t a" style="left:1190.5px;top:417px;letter-spacing:0.04px">px/s</span><span class="t adda" style="left:846.0px;top:447px;letter-spacing:-0.109px">Ajouter une action</span><span class="t a" style="left:871.86px;top:487px;letter-spacing:-0.42px;transform:scaleX(0.9406)">Fire</span><span class="t obj" style="left:936.4px;top:487px;letter-spacing:-0.326px">NewSprite4</span><span class="t a" style="left:1059.2px;top:487px;letter-spacing:0.27px">from</span><span class="t obj" style="left:1134.7px;top:487px;letter-spacing:-0.42px;transform:scaleX(0.9814)">CubeHéro2</span><span class="t a" style="left:1245.8px;top:487px">,</span><span class="t a" style="left:1257.2px;top:487px;letter-spacing:0.065px">at position</span><span class="t num" style="left:1362.22px;top:487px;letter-spacing:-0.42px;transform:scaleX(0.9781)">CubeHéro2.X();</span><span class="t num" style="left:1510.33px;top:487px;letter-spacing:-0.42px;transform:scaleX(0.9659)">CubeHéro2.Y()</span><span class="t a" style="left:1645.0px;top:487px">,</span><span class="t a" style="left:1657.4px;top:487px;letter-spacing:0.068px">toward position</span><span class="t num" style="left:849.1px;top:516px;letter-spacing:-0.42px;transform:scaleX(0.9638)">viseur2.X();viseur2.Y()</span><span class="t a" style="left:1054.6px;top:516px;letter-spacing:-0.42px">with speed</span><span class="t num" style="left:1161.66px;top:516px;letter-spacing:-0.42px;transform:scaleX(0.9405)">1000</span><span class="t a" style="left:1213.0px;top:516px;letter-spacing:0.04px">px/s</span><span class="t adda" style="left:846.0px;top:546px;letter-spacing:-0.109px">Ajouter une action</span><span class="t adda" style="left:846.0px;top:585px;letter-spacing:-0.109px">Ajouter une action</span><span class="t a" style="left:872.2px;top:654px;letter-spacing:-0.42px;transform:scaleX(0.9994)">Supprimer</span><span class="t obj" style="left:999.0px;top:654px;letter-spacing:-0.293px">NewSprite2</span><span class="t a" style="left:871.8px;top:686px;letter-spacing:-0.085px">Appliquer</span><span class="t num" style="left:970.32px;top:686px;letter-spacing:-0.42px;transform:scaleX(0.8829)">1.5</span><span class="t a" style="left:1003.5px;top:686px;letter-spacing:-0.277px">points de dommages à</span><span class="t obj" style="left:1248.1px;top:686px;letter-spacing:-0.42px;transform:scaleX(0.9782)">ennemi1</span><span class="t a" style="left:1340.3px;top:686px;letter-spacing:-0.307px">(Les dommages peuvent être réduits par le bouclier :</span><span class="t str" style="left:1834.7px;top:686px;letter-spacing:0.193px">oui</span><span class="t a" style="left:1864.5px;top:686px">,</span><span class="t a" style="left:847.1px;top:714px;letter-spacing:-0.162px">l'armure :</span><span class="t str" style="left:941.7px;top:714px;letter-spacing:-0.107px">oui</span><span class="t a" style="left:971.8px;top:714px">)</span><span class="t adda" style="left:846.0px;top:745px;letter-spacing:-0.109px">Ajouter une action</span><span class="t a" style="left:872.2px;top:779px;letter-spacing:-0.42px;transform:scaleX(0.9994)">Supprimer</span><span class="t obj" style="left:999.0px;top:779px;letter-spacing:-0.293px">NewSprite4</span><span class="t a" style="left:871.8px;top:811px;letter-spacing:-0.085px">Appliquer</span><span class="t num" style="left:970.32px;top:811px;letter-spacing:-0.42px;transform:scaleX(0.8829)">1.5</span><span class="t a" style="left:1003.5px;top:811px;letter-spacing:-0.277px">points de dommages à</span><span class="t obj" style="left:1248.1px;top:811px;letter-spacing:-0.42px;transform:scaleX(0.9782)">ennemi1</span><span class="t a" style="left:1340.3px;top:811px;letter-spacing:-0.307px">(Les dommages peuvent être réduits par le bouclier :</span><span class="t str" style="left:1834.7px;top:811px;letter-spacing:0.193px">oui</span><span class="t a" style="left:1864.5px;top:811px">,</span><span class="t a" style="left:847.1px;top:839px;letter-spacing:-0.162px">l'armure :</span><span class="t str" style="left:941.7px;top:839px;letter-spacing:-0.107px">oui</span><span class="t a" style="left:971.8px;top:839px">)</span><span class="t adda" style="left:846.0px;top:870px;letter-spacing:-0.109px">Ajouter une action</span><span class="t a" style="left:871.6px;top:903px;letter-spacing:-0.295px">Lancer (ou réinitialiser) le chronomètre</span><span class="t str" style="left:1236.4px;top:903px;letter-spacing:-0.42px;transform:scaleX(0.9938)">"spawn"</span><span class="t a" style="left:871.0px;top:935px;letter-spacing:-0.42px;transform:scaleX(0.9983)">Changer le zoom de la caméra en</span><span class="t num" style="left:1189.64px;top:935px;letter-spacing:-0.42px;transform:scaleX(0.8638)">1.1</span><span class="t a" style="left:1222.7px;top:935px;letter-spacing:-0.42px;transform:scaleX(0.997)">(calque :</span><span class="t str" style="left:1307.62px;top:935px;letter-spacing:-0.42px;transform:scaleX(0.9819)">Calque de base</span><span class="t a" style="left:1449.85px;top:935px;letter-spacing:-0.42px;transform:scaleX(0.9451)">, caméra :</span><span class="t a" style="left:1547.9px;top:935px">)</span><span class="t adda" style="left:846.0px;top:966px;letter-spacing:-0.109px">Ajouter une action</span>
<i class="sbt"></i><i class="sb"></i>
</div>
</body></html>
